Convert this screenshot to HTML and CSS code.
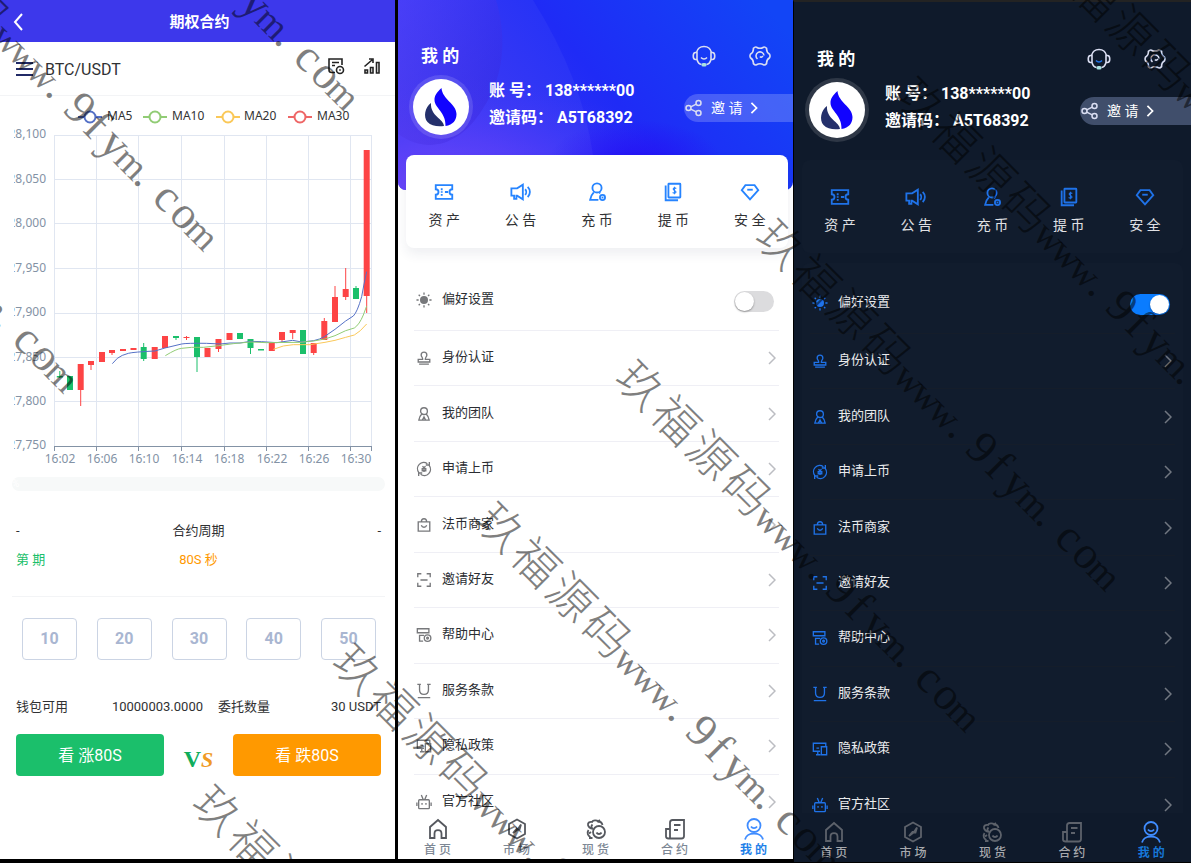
FILE: index.html
```html
<!DOCTYPE html>
<html lang="zh-CN">
<head>
<meta charset="utf-8">
<meta name="viewport" content="width=device-width, initial-scale=1">
<title>期权合约</title>
<link rel="stylesheet" href="styles.css">
</head>
<body>
<svg class="sprite" aria-hidden="true">
  <symbol id="i-headset" viewBox="0 0 24 24"><path d="M4.500 8.500C5.500 4.500 8.500 2.500 12 2.500s6.500 2 7.500 6M5 8.500v7H3.500C.5 15.500.5 8.500 3.500 8.500zM19 8.500v7h1.500c3 0 3-7 0-7zM19 15.500c-.8 3-2.500 4.800-4.500 5M5 15.500c.8 3 2.500 4.800 4.500 5"/><path class="smile" d="M9 13.500c1.800 2 4.200 2 6 0"/><rect class="mic" x="9.500" y="19" width="5" height="3.500" rx="1.500"/></symbol>
  <symbol id="i-gear" viewBox="0 0 24 24"><path d="M8.500 3.200Q12 5.400 15.500 3.200Q17 2.600 18.600 4.400Q18.300 8.300 21.600 10.200Q22.400 12 21.600 13.800Q18.300 15.700 18.600 19.600Q17 21.400 15.500 20.800Q12 18.600 8.500 20.800Q7 21.400 5.400 19.600Q5.700 15.700 2.400 13.800Q1.600 12 2.400 10.200Q5.700 8.300 5.400 4.400Q7 2.600 8.500 3.200z"/><path d="M9.500 15a4 4 0 1 1 6.500-3.500M12 12.500q1 1.500 3-.5"/></symbol>
  <symbol id="i-share" viewBox="0 0 18 18"><circle cx="3.500" cy="9" r="2.500"/><circle cx="13.500" cy="4" r="2.500"/><circle cx="13.500" cy="14" r="2.500"/><path d="M5.700 7.900l5.600-2.800M5.700 10.100l5.600 2.800"/></symbol>
  <symbol id="i-chev" viewBox="0 0 8 14"><path d="M1 1l6 6-6 6"/></symbol>
  <symbol id="logo" viewBox="0 0 56 56"><circle cx="28" cy="28" r="28" fill="#fff"/><path fill="#1103ff" d="M28.500 9C23 14 21.500 17 21.500 21c0 8 11.500 12 11 26 7.500-1 11-6 11-12C43.500 25 29 20 28.500 9z"/><path fill="#24306b" d="M18 24c-6 4-8 14-3.500 19C18 47 25 48 31 47 31 40 17 37 18 24z"/></symbol>

  <symbol id="i-ticket" viewBox="0 0 24 24"><path d="M3 4.500h18v4.500a3 3 0 0 0 0 6v4.500H3V15a3 3 0 0 0 0-6z"/><path d="M9.500 8v2M9.500 11.300v1.600M9.500 14.200v2M13 12h3.500"/></symbol>
  <symbol id="i-horn" viewBox="0 0 24 24"><path d="M1.500 8h6.300L14 4v16l-6.200-4H7v3.500H4.500V16H1.500zM16.500 9c1.600 1.700 1.600 4.500 0 6.200M19.300 6.500c3.200 3.200 3.200 8 0 11.200"/></symbol>
  <symbol id="i-deposit" viewBox="0 0 24 24"><circle cx="12" cy="7.500" r="5"/><path d="M8.500 12.500C6 15 5 17.500 4.500 20.500h9M14.500 12.500l1 1"/><circle cx="18" cy="18" r="2.800"/><path d="M17 18h2"/></symbol>
  <symbol id="i-withdraw" viewBox="0 0 24 24"><rect x="7" y="3" width="13" height="15" rx=".5"/><path d="M4 5v16h13.500"/><path d="M15.600 8.200c-2.500-1.800-5 .5-2 2.100 3.500 1.600.8 4-2 2.200M13.600 6.300v8.200" stroke-width="1.200"/></symbol>
  <symbol id="i-safe" viewBox="0 0 24 24"><path d="M7 4.500h10l4 5.500-9 10-9-10z"/><path d="M9 9.500h6"/></symbol>

  <symbol id="i-sun" viewBox="0 0 18 18"><circle cx="9" cy="9" r="4.500" fill="currentColor" stroke="none"/><path d="M9 .5v2.500M9 15v2.500M.5 9h2.500M15 9h2.500M3 3l1.500 1.500M13.500 13.500l1.500 1.500M15 3l-1.500 1.500M4.500 13.500l-1.500 1.500"/></symbol>
  <symbol id="i-stamp" viewBox="0 0 18 18"><path d="M7.500 10.500c.3-2-1.700-3-1.700-5a3.200 3.200 0 0 1 6.400 0c0 2-2 3-1.700 5h5v3h-13v-3zM3.500 15.800h11"/></symbol>
  <symbol id="i-team" viewBox="0 0 18 18"><circle cx="9" cy="5.800" r="3.800"/><path d="M6.500 9c-2 2-3 4-3.300 6.800h4L9 12.300l1.800 3.500h4C14.500 13 13.500 11 11.500 9M6 15.800h6"/></symbol>
  <symbol id="i-cycle" viewBox="0 0 18 18"><path d="M3.200 13a7 7 0 0 1 9.600-10M14.800 5a7 7 0 0 1-9.600 10M11 4.500h4v-3.500M7 13.500H3v3.500M7.300 6l1.700 1.700L10.700 6M9 7.500v5M7 8.500h4v2.500H7z"/></symbol>
  <symbol id="i-bag" viewBox="0 0 18 18"><path d="M2.500 5.500h13v10.300h-13zM6 5.500C6 .8 12 .8 12 5.500M6 9.300c1 3 5 3 6 0"/></symbol>
  <symbol id="i-scan" viewBox="0 0 18 18"><path d="M2 6V2h4M12 2h4v4M16 12v4h-4M6 16H2v-4M5 9h8"/></symbol>
  <symbol id="i-help" viewBox="0 0 18 18"><path d="M1.500 2h13v4.500h-13zM8 15.800H4V9.500H9"/><circle cx="13" cy="12.500" r="3.700"/><circle cx="13" cy="12.500" r="1"/></symbol>
  <symbol id="i-terms" viewBox="0 0 18 18"><path d="M1.500 1.500h4M12.500 1.500h4M4 1.500v6.500c0 6.500 10 6.500 10 0V1.500M2 16.500h14"/></symbol>
  <symbol id="i-privacy" viewBox="0 0 18 18"><path d="M9 11.500H1.500v-9h14V6M4.500 15.500h5M6.500 11.500v4M10.500 6.500h6v9h-6zM5 8h3"/></symbol>
  <symbol id="i-robot" viewBox="0 0 18 18"><rect x="3" y="6.500" width="12" height="10" rx="1"/><path d="M6 1l2 5M12 1l-2 5M1 9.500v4M17 9.500v4M6.800 10v2M11.200 10v2"/></symbol>

  <symbol id="t-home" viewBox="0 0 22 22"><path d="M3 20V9l8-7 8 7v11h-4.500v-4.500c0-4.500-7-4.500-7 0V20z"/></symbol>
  <symbol id="t-market" viewBox="0 0 22 22"><path d="M11 1.500l8 4.500v10l-8 4.500L3 16V6z"/><path d="M7 15l3.500-4h1.500l3-4.500-1.500 5H11.500z"/></symbol>
  <symbol id="t-spot" viewBox="0 0 22 22"><circle cx="14" cy="14" r="6"/><path d="M11.500 14.500c1 2 4 2 5 0M8 11c-2-.5-4.500-1.500-5-4C2.500 4.500 5 3.500 7 4c1-2 5-2 6-.5l2-1.500M7.500 6.500C6 8 6 9.500 8 11M13 3.500c2 0 4 1 4.500 3.500M3.500 12C1.500 15 3 18 5.500 19M6 14l-2 1.500M4 20h3.500"/></symbol>
  <symbol id="t-contract" viewBox="0 0 22 22"><path d="M6 20.500V4.500Q6 2 8.500 2H20v16q0 2.500-2.500 2.500H4.500Q2 20.500 2 18.500V11h4M10 7h6.500M10 12h4"/></symbol>
  <symbol id="t-mine" viewBox="0 0 22 22"><circle cx="11" cy="7.500" r="6.500"/><path d="M8 8.500c1.500 2.200 4.500 2.200 6 0M2 21.500c1.500-8 16.500-8 18 0"/></symbol>
</svg>

<main class="board">
  <section class="panel trade">
    <header class="trade-head">
      <button class="back" aria-label="返回"><svg viewBox="0 0 10 18"><path d="M9 1L2 9l7 8"/></svg></button>
      <h1>期权合约</h1>
    </header>
    <div class="pair">
      <button class="icon-btn" aria-label="菜单"><svg class="burger" viewBox="0 0 17 16"><path d="M0 2h17M0 8h17M0 14h17"/></svg></button>
      <span class="pair-name">BTC/USDT</span>
      <button class="icon-btn" aria-label="订单"><svg class="tool" viewBox="0 0 18 18"><path d="M8 15.500H4.500Q2 15.500 2 13V2h13v6M5 5.500h7M5 8.500h3"/><circle cx="13" cy="13" r="3.500"/><path d="M13 12.300v1.400"/></svg></button>
      <button class="icon-btn" aria-label="行情"><svg class="tool" viewBox="0 0 18 18"><path d="M1.500 9.500L9 3M6 2h4v4M2 13h2.500v3H2zM7.500 10.500h2.500V16H7.500zM13.500 5.500h2.500V16h-2.500z"/></svg></button>
    </div>
    <svg class="chart" viewBox="0 96 395 374" role="img" aria-label="K线图">
      <defs><clipPath id="axis-clip"><rect x="14" y="96" width="381" height="374"/></clipPath></defs>
      <g class="legend">
        <g stroke="#5470c6"><path d="M78 117h24"/><circle cx="90" cy="117" r="5.500"/></g><text x="107" y="120">MA5</text>
        <g stroke="#91cc75"><path d="M143 117h24"/><circle cx="155" cy="117" r="5.500"/></g><text x="172" y="120">MA10</text>
        <g stroke="#fac858"><path d="M216 117h24"/><circle cx="228" cy="117" r="5.500"/></g><text x="244" y="120">MA20</text>
        <g stroke="#ee6666"><path d="M288 117h24"/><circle cx="300" cy="117" r="5.500"/></g><text x="317" y="120">MA30</text>
      </g>
      <path class="grid" d="M54 135.500h318M54 179.500h318M54 223.500h318M54 268.500h318M54 313.500h318M54 357.500h318M54 401.500h318M54.500 135v311M96.500 135v311M138.500 135v311M181.500 135v311M224.500 135v311M266.500 135v311M308.500 135v311M350.500 135v311M371.500 135v311"/>
      <path class="axis" d="M54 446.500h318M54.500 446v5M96.500 446v5M138.500 446v5M181.500 446v5M224.500 446v5M266.500 446v5M308.500 446v5M350.500 446v5M371.500 446v5"/>
      <g class="ylab" clip-path="url(#axis-clip)">
        <text x="46" y="138">28,100</text><text x="46" y="183">28,050</text><text x="46" y="227">28,000</text><text x="46" y="272">27,950</text>
        <text x="46" y="316">27,900</text><text x="46" y="361">27,850</text><text x="46" y="405">27,800</text><text x="46" y="449">27,750</text>
      </g>
      <g class="xlab">
        <text x="60" y="463">16:02</text><text x="102" y="463">16:06</text><text x="144" y="463">16:10</text><text x="187" y="463">16:14</text>
        <text x="229" y="463">16:18</text><text x="272" y="463">16:22</text><text x="314" y="463">16:26</text><text x="356" y="463">16:30</text>
      </g>
      <g class="up">
        <path class="body" d="M80.700 364V390M91 361V365M102 352V362M112 350V353M123 349V351M133.500 348V350M154.700 347V359M165 336V348M186.500 337V338M207.500 348V357M218.500 339V349M229.500 333V340M271.800 343V351M282 332V340M292.700 330V333M313.700 343V353M324.300 321V340M335 297V322M345.700 289V297M366.700 150V296"/>
        <path class="wick" d="M80.700 364V406M91 361V370M112 350V355M186.500 336V340M218.500 339V352M282 332V343M292.700 330V339M313.700 343V355M324.300 318V340M335 286V322M345.700 268V300M366.700 150V313"/>
      </g>
      <g class="down">
        <path class="body" d="M59.800 376V377.500M70 376V390M143.700 347V359M176 336V338M197 337V357M240 333V339M250.500 339V348M261 349V350.500M303 330V354M356 288V299"/>
        <path class="wick" d="M59.800 371V378M143.700 343V361M176 336V340M197 337V372M250.500 339V354M356 286V299"/>
      </g>
      <g class="ma" transform="translate(0 240) scale(.33333)">
        <path stroke="#5470c6" d="M337 371L352 355Q365 345 385 340Q400 336 465 333L495 324L545 312Q560 309 620 310L660 312L690 309H720L752 304L785 305L830 308L878 301L905 306L941 302Q960 298 973 290L1005 268L1037 243L1060 228Q1072 216 1085 170Q1092 130 1100 95"/>
        <path stroke="#91cc75" d="M496 347Q530 326 545 325L575 322H610L656 317L700 311L750 306L800 308L900 307L941 303L975 297L1005 287L1037 272L1063 264Q1078 254 1090 225L1100 198"/>
        <path stroke="#fac858" d="M820 328L850 318L880 314H930L975 307L1005 301L1037 292L1063 285Q1080 276 1100 252"/>
      </g>
    </svg>
    <div class="progress">%</div>
    <div class="period">
      <div><p>-</p><p class="green">第 期</p></div>
      <div class="mid"><p>合约周期</p><p class="orange">80S 秒</p></div>
      <div class="end"><p>-</p></div>
    </div>
    <div class="amounts">
      <button>10</button><button>20</button><button>30</button><button>40</button><button>50</button>
    </div>
    <div class="wallet">
      <div><span>钱包可用</span><span>10000003.0000</span></div>
      <div><span>委托数量</span><span>30 USDT</span></div>
    </div>
    <div class="versus">
      <button class="rise">看 涨80S</button>
      <span class="vs"><b>V</b><i>S</i></span>
      <button class="fall">看 跌80S</button>
    </div>
  </section>

  <section class="panel mine light">
    <svg class="hero-bg" viewBox="0 0 395 190" preserveAspectRatio="none" aria-hidden="true">
      <defs>
        <linearGradient id="hb" x1="0" y1="0.600" x2="1" y2="0.200"><stop offset="0" stop-color="#3f35f2"/><stop offset=".5" stop-color="#1f2bf6"/><stop offset="1" stop-color="#1245f6"/></linearGradient>
        <radialGradient id="hv" cx=".12" cy="1" r=".6"><stop offset="0" stop-color="#7042fb"/><stop offset="1" stop-color="#4033fa" stop-opacity="0"/></radialGradient>
        <linearGradient id="hc" x1="0" y1="0" x2="1" y2="1"><stop offset="0" stop-color="#6a4cff" stop-opacity=".3"/><stop offset="1" stop-color="#2a16c8" stop-opacity=".3"/></linearGradient>
        <radialGradient id="hm" cx=".6" cy=".85" r=".22"><stop offset="0" stop-color="#2412f4"/><stop offset="1" stop-color="#2412f4" stop-opacity="0"/></radialGradient>
      </defs>
      <rect width="395" height="190" fill="url(#hb)"/>
      <rect width="395" height="190" fill="url(#hv)"/>
      <rect width="395" height="190" fill="url(#hm)"/>
      <path d="M0 0H135Q185 80 195 155V190H0z" fill="#fff" fill-opacity=".04"/>
      <path d="M0 0H98C110 40 105 80 84 110C62 145 30 155 0 134z" fill="url(#hc)"/>
    </svg>
    <div class="scroll">
      <header class="profile">
        <div class="profile-top"><h2>我 的</h2><button class="icon-btn" aria-label="客服"><svg><use href="#i-headset"/></svg></button><button class="icon-btn" aria-label="设置"><svg><use href="#i-gear"/></svg></button></div>
        <div class="identity">
          <span class="avatar"><svg role="img" aria-label="头像"><use href="#logo"/></svg></span>
          <div class="ids"><p>账 号： 138******00</p><p>邀请码： A5T68392</p></div>
          <a class="invite" href="#invite"><svg class="share"><use href="#i-share"/></svg><span>邀 请</span><svg class="go"><use href="#i-chev"/></svg></a>
        </div>
      </header>
      <nav class="card">
        <a href="#assets"><svg><use href="#i-ticket"/></svg>资 产</a>
        <a href="#notice"><svg><use href="#i-horn"/></svg>公 告</a>
        <a href="#deposit"><svg><use href="#i-deposit"/></svg>充 币</a>
        <a href="#withdraw"><svg><use href="#i-withdraw"/></svg>提 币</a>
        <a href="#security"><svg><use href="#i-safe"/></svg>安 全</a>
      </nav>
      <div class="settings">
        <label class="row pref"><svg class="ico"><use href="#i-sun"/></svg><span>偏好设置</span><input type="checkbox" role="switch"></label>
        <nav class="list">
          <a class="row" href="#kyc"><svg class="ico"><use href="#i-stamp"/></svg><span>身份认证</span><svg class="chev"><use href="#i-chev"/></svg></a>
          <a class="row" href="#team"><svg class="ico"><use href="#i-team"/></svg><span>我的团队</span><svg class="chev"><use href="#i-chev"/></svg></a>
          <a class="row" href="#listing"><svg class="ico"><use href="#i-cycle"/></svg><span>申请上币</span><svg class="chev"><use href="#i-chev"/></svg></a>
          <a class="row" href="#otc"><svg class="ico"><use href="#i-bag"/></svg><span>法币商家</span><svg class="chev"><use href="#i-chev"/></svg></a>
          <a class="row" href="#friends"><svg class="ico"><use href="#i-scan"/></svg><span>邀请好友</span><svg class="chev"><use href="#i-chev"/></svg></a>
          <a class="row" href="#help"><svg class="ico"><use href="#i-help"/></svg><span>帮助中心</span><svg class="chev"><use href="#i-chev"/></svg></a>
          <a class="row" href="#terms"><svg class="ico"><use href="#i-terms"/></svg><span>服务条款</span><svg class="chev"><use href="#i-chev"/></svg></a>
          <a class="row" href="#privacy"><svg class="ico"><use href="#i-privacy"/></svg><span>隐私政策</span><svg class="chev"><use href="#i-chev"/></svg></a>
          <a class="row" href="#community"><svg class="ico"><use href="#i-robot"/></svg><span>官方社区</span><svg class="chev"><use href="#i-chev"/></svg></a>
        </nav>
      </div>
    </div>
    <nav class="tabs">
      <a href="#home"><svg><use href="#t-home"/></svg>首 页</a>
      <a href="#market"><svg><use href="#t-market"/></svg>市 场</a>
      <a href="#spot"><svg><use href="#t-spot"/></svg>现 货</a>
      <a href="#contract"><svg><use href="#t-contract"/></svg>合 约</a>
      <a class="active" href="#mine"><svg><use href="#t-mine"/></svg>我 的</a>
    </nav>
  </section>

  <section class="panel mine dark">
    <div class="scroll">
      <header class="profile">
        <div class="profile-top"><h2>我 的</h2><button class="icon-btn" aria-label="客服"><svg><use href="#i-headset"/></svg></button><button class="icon-btn" aria-label="设置"><svg><use href="#i-gear"/></svg></button></div>
        <div class="identity">
          <span class="avatar"><svg role="img" aria-label="头像"><use href="#logo"/></svg></span>
          <div class="ids"><p>账 号： 138******00</p><p>邀请码： A5T68392</p></div>
          <a class="invite" href="#invite"><svg class="share"><use href="#i-share"/></svg><span>邀 请</span><svg class="go"><use href="#i-chev"/></svg></a>
        </div>
      </header>
      <nav class="card">
        <a href="#assets"><svg><use href="#i-ticket"/></svg>资 产</a>
        <a href="#notice"><svg><use href="#i-horn"/></svg>公 告</a>
        <a href="#deposit"><svg><use href="#i-deposit"/></svg>充 币</a>
        <a href="#withdraw"><svg><use href="#i-withdraw"/></svg>提 币</a>
        <a href="#security"><svg><use href="#i-safe"/></svg>安 全</a>
      </nav>
      <div class="settings">
        <label class="row pref"><svg class="ico"><use href="#i-sun"/></svg><span>偏好设置</span><input type="checkbox" role="switch" checked></label>
        <nav class="list">
          <a class="row" href="#kyc"><svg class="ico"><use href="#i-stamp"/></svg><span>身份认证</span><svg class="chev"><use href="#i-chev"/></svg></a>
          <a class="row" href="#team"><svg class="ico"><use href="#i-team"/></svg><span>我的团队</span><svg class="chev"><use href="#i-chev"/></svg></a>
          <a class="row" href="#listing"><svg class="ico"><use href="#i-cycle"/></svg><span>申请上币</span><svg class="chev"><use href="#i-chev"/></svg></a>
          <a class="row" href="#otc"><svg class="ico"><use href="#i-bag"/></svg><span>法币商家</span><svg class="chev"><use href="#i-chev"/></svg></a>
          <a class="row" href="#friends"><svg class="ico"><use href="#i-scan"/></svg><span>邀请好友</span><svg class="chev"><use href="#i-chev"/></svg></a>
          <a class="row" href="#help"><svg class="ico"><use href="#i-help"/></svg><span>帮助中心</span><svg class="chev"><use href="#i-chev"/></svg></a>
          <a class="row" href="#terms"><svg class="ico"><use href="#i-terms"/></svg><span>服务条款</span><svg class="chev"><use href="#i-chev"/></svg></a>
          <a class="row" href="#privacy"><svg class="ico"><use href="#i-privacy"/></svg><span>隐私政策</span><svg class="chev"><use href="#i-chev"/></svg></a>
          <a class="row" href="#community"><svg class="ico"><use href="#i-robot"/></svg><span>官方社区</span><svg class="chev"><use href="#i-chev"/></svg></a>
        </nav>
      </div>
    </div>
    <nav class="tabs">
      <a href="#home"><svg><use href="#t-home"/></svg>首 页</a>
      <a href="#market"><svg><use href="#t-market"/></svg>市 场</a>
      <a href="#spot"><svg><use href="#t-spot"/></svg>现 货</a>
      <a href="#contract"><svg><use href="#t-contract"/></svg>合 约</a>
      <a class="active" href="#mine"><svg><use href="#t-mine"/></svg>我 的</a>
    </nav>
  </section>
</main>

<svg class="watermark" aria-hidden="true">
  <defs>
    <text id="mark" x="25 75 125 175">玖福源码<tspan class="wide" x="212 237 262">www</tspan><tspan x="281 312 336 362">.9fy</tspan><tspan class="wide" x="387">m</tspan><tspan x="406 437 462">.co</tspan><tspan class="wide" x="487">m</tspan></text>
  </defs>
  <use href="#mark" transform="translate(1031 -46) rotate(45)"/>
  <use href="#mark" transform="translate(891 96) rotate(45)"/>
  <use href="#mark" transform="translate(751 238) rotate(45)"/>
  <use href="#mark" transform="translate(611 379) rotate(45)"/>
  <use href="#mark" transform="translate(471 521) rotate(45)"/>
  <use href="#mark" transform="translate(328 663) rotate(45)"/>
  <use href="#mark" transform="translate(188 804) rotate(45)"/>
  <use href="#mark" transform="translate(-10 -242) rotate(45)"/>
  <use href="#mark" transform="translate(-151 -102) rotate(45)"/>
  <use href="#mark" transform="translate(-291 40) rotate(45)"/>
</svg>
</body>
</html>
```
FILE: styles.css
```css
* { box-sizing: border-box; }
body {
  margin: 0;
  background: #000;
  color: #303133;
  font: 14px/20px Roboto, "Noto Sans CJK SC", sans-serif;
  position: relative;
}
h1, h2, p { margin: 0; }
a { color: inherit; text-decoration: none; }
button { font: inherit; padding: 0; border: 0; background: none; color: inherit; cursor: pointer; }
svg { fill: none; stroke: currentColor; display: block; flex: none; }
.sprite { position: absolute; width: 0; height: 0; }

.board {
  display: grid;
  grid-template-columns: 398fr 395fr 398fr;
  height: 100vh;
}
.panel { display: flex; flex-direction: column; min-width: 0; overflow: hidden; }

/* Options trading */
.trade { background: #fff; margin: 0 3px 4px 0; font-size: 13px; }
.trade-head {
  display: grid;
  grid-template-columns: 32px 1fr 32px;
  align-items: center;
  height: 42px;
  padding: 2px 8px 0 12px;
  background: #3d38eb;
  color: #fff;
  flex: none;
}
.trade-head h1 { font-size: 15px; line-height: 24px; font-weight: 700; text-align: center; }
.back svg { width: 12px; height: 18px; stroke-width: 2; }
.pair {
  display: flex;
  align-items: center;
  height: 54px;
  padding: 0 14px 0 16px;
  border-bottom: 1px solid #f3f4f6;
  flex: none;
}
.burger { width: 17px; height: 16px; stroke: #212a66; stroke-width: 2; }
.pair-name { flex: 1; margin-left: 12px; padding-top: 2px; font-size: 16px; }
.tool { width: 18px; height: 18px; stroke-width: 1.600; color: #222; margin-bottom: 6px; }
.pair .icon-btn + .icon-btn { margin-left: 18px; }
.chart { width: 100%; height: auto; font-family: "Noto Sans", sans-serif; font-size: 12px; }
.chart text { stroke: none; }
.legend { stroke-width: 2; }
.legend circle { fill: #fff; }
.legend text { fill: #333; }
.grid { stroke: #e0e6f1; }
.axis { stroke: #8392a5; }
.ylab { fill: #8392a5; text-anchor: end; }
.xlab { fill: #8392a5; text-anchor: middle; }
.up { stroke: #fd4445; }
.down { stroke: #1bbf6b; }
.body { stroke-width: 6; }
.wick { stroke-width: 1; }
.ma { stroke-width: 3; }
.progress {
  margin: 7px 10px 0 12px;
  height: 14px;
  border-radius: 7px;
  background: #f7f9f9;
  color: #fff;
  font-size: 10px;
  line-height: 14px;
  flex: none;
}
.period {
  display: grid;
  grid-template-columns: 1fr 1fr 1fr;
  margin: 0 10px 0 12px;
  padding: 30px 4px 26px;
  border-bottom: 1px solid #f3f4f6;
}
.period p + p { margin-top: 9px; }
.mid { text-align: center; }
.end { text-align: right; }
.green { color: #1bbf6b; }
.orange { color: #ff9900; }
.amounts { display: flex; justify-content: space-between; padding: 21px 19px 0 22px; }
.amounts button {
  width: 55px;
  height: 42px;
  border: 1px solid #cbd4e4;
  border-radius: 4px;
  color: #a9b6d1;
  font-size: 16px;
  font-weight: 700;
}
.wallet {
  display: grid;
  grid-template-columns: 187fr 163fr;
  gap: 15px;
  padding: 37px 14px 0 16px;
}
.wallet div { display: flex; justify-content: space-between; }
.versus { display: flex; align-items: center; padding: 17px 14px 0 16px; }
.versus button { flex: 1; height: 42px; padding-top: 2px; border-radius: 4px; color: #fff; font-size: 16px; }
.versus .rise { background: #1bbf6b; }
.versus .fall { background: #ff9900; }
.vs { width: 69px; padding-top: 8px; text-align: center; font: 24px/28px "Liberation Serif", serif; }
.vs b { color: #0fad5c; }
.vs i { color: #ef9a25; font-weight: 700; font-size: 22px; }

/* Profile */
.mine { position: relative; }
.light {
  --accent: #2684ff;
  --text: #2b2e33;
  --icon: #77787b;
  --line: #efeff5;
  --surface: #fff;
  --chev: #bcbdc2;
  --tab: #55585e;
  --tab-text: #7d8794;
  --active: #1e7fe8;
  --card-text: #303133;
  --smile: #dadef2;
  background: #fff;
  margin-bottom: 4px;
}
.dark {
  --accent: #1f72e8;
  --text: #e9eaec;
  --icon: #1f72e8;
  --line: #151d2a;
  --surface: #111c2d;
  --chev: #717781;
  --tab: #5d626b;
  --tab-text: #a7a9ad;
  --active: #1677d8;
  --card-text: #e0e1e4;
  --smile: #1f72e8;
  background: #0f1a2b;
  margin-bottom: 1px;
  border-left: 1px solid #000;
  border-top: 2px solid #232323;
}
.hero-bg { position: absolute; left: 0; top: 0; width: 100%; height: 190px; border-radius: 0 0 8px 8px; stroke: none; }
.scroll { position: relative; flex: 1; min-height: 0; overflow: hidden; }
.profile { color: #fff; }
.profile-top { display: flex; align-items: center; gap: 32px; padding: 44px 21px 0 23px; }
.dark .profile-top { padding: 45px 24px 0 23px; }
.profile-top h2 { flex: 1; font-size: 17px; line-height: 24px; font-weight: 700; }
.profile-top svg { width: 24px; height: 24px; stroke: #dadef2; stroke-width: 1.600; }
.mic { fill: #a8e0e0; stroke: none; }
.smile { stroke: var(--smile); }
.identity { display: flex; padding: 7px 0 0 11px; }
.avatar { width: 64px; height: 64px; padding: 4px; border-radius: 50%; background: rgba(255, 255, 255, .13); }
.avatar svg { width: 56px; height: 56px; stroke: none; }
.ids { margin: 2px 0 0 16px; font-size: 16px; line-height: 27px; font-weight: 700; }
.invite {
  display: flex;
  align-items: center;
  margin: 19px 0 0 auto;
  width: 109px;
  height: 28px;
  padding: 0 0 1px 1px;
  border-radius: 14px 0 0 14px;
  background: rgba(255, 255, 255, .2);
}
.dark .invite { background: #404e6b; width: 111px; }
.share { width: 18px; height: 18px; stroke-width: 1.500; stroke: #dadef2; }
.invite span { margin: 0 8px; }
.go { width: 8px; height: 12px; stroke-width: 2; }
.card {
  display: grid;
  grid-template-columns: repeat(5, 1fr);
  margin: 16px 5px 0 8px;
  padding: 25px 0 18px;
  border-radius: 8px;
  background: var(--surface);
  color: var(--card-text);
  box-shadow: 0 6px 12px rgba(40, 50, 90, .08);
}
.dark .card { margin: 18px 8px 0; box-shadow: none; }
.card a { display: flex; flex-direction: column; align-items: center; gap: 6px; }
.card svg { width: 24px; height: 24px; stroke: var(--accent); stroke-width: 2; padding: 1px; }
.settings { margin: 22px 14px 0 16px; color: var(--text); font-size: 13px; }
.dark .settings { margin: 10px 8px 0; padding: 10px 8px 0; background: var(--surface); border-radius: 8px; }
.row {
  display: grid;
  grid-template-columns: 18px 1fr auto;
  align-items: center;
  gap: 9px;
  padding: 0 3px 0 1px;
  border-bottom: 1px solid var(--line);
}
.row span { padding-bottom: 2px; }
.pref { height: 61px; }
.list { display: grid; grid-auto-rows: 1fr; min-height: 499px; }
.ico { width: 18px; height: 18px; padding: 1px; stroke: var(--icon); color: var(--icon); stroke-width: 1.500; }
.chev { width: 8px; height: 14px; stroke: var(--chev); stroke-width: 1.500; }
.row input {
  appearance: none;
  width: 40px;
  height: 21px;
  margin: 3px 2px 0 0;
  padding: 1px;
  border-radius: 11px;
  background: #dcdcde;
}
.row input::before {
  content: "";
  display: block;
  width: 19px;
  height: 19px;
  border-radius: 50%;
  background: #fff;
  box-shadow: 0 1px 2px rgba(0, 0, 0, .35);
}
.row input:checked { background: #0a7cff; }
.row input:checked::before { margin-left: 19px; }
.tabs {
  position: relative;
  display: grid;
  grid-template-columns: repeat(5, 1fr);
  flex: none;
  padding: 5px 0 1px;
  background: var(--surface);
  color: var(--tab-text);
  font-size: 12px;
  line-height: 16px;
  font-weight: 500;
}
.dark .tabs { padding-top: 8px; background: #0f1a2b; }
.tabs a { display: flex; flex-direction: column; align-items: center; gap: 2px; }
.tabs svg { width: 22px; height: 22px; stroke: var(--tab); stroke-width: 1.800; }
.tabs .active { color: var(--active); font-weight: 700; }
.tabs .active svg { stroke: #3f8cff; }

/* Diagonal site mark over all panels */
.watermark {
  position: absolute;
  inset: 0;
  width: 100%;
  height: 100%;
  overflow: hidden;
  pointer-events: none;
  stroke: none;
  fill: rgba(0, 0, 0, .5);
  text-anchor: middle;
  font-family: "Noto Sans CJK SC", sans-serif;
  font-size: 46px;
  font-weight: 300;
}
.watermark tspan { font-family: "Liberation Serif", serif; font-size: 46px; }
.watermark .wide { font-size: 38px; }
```
